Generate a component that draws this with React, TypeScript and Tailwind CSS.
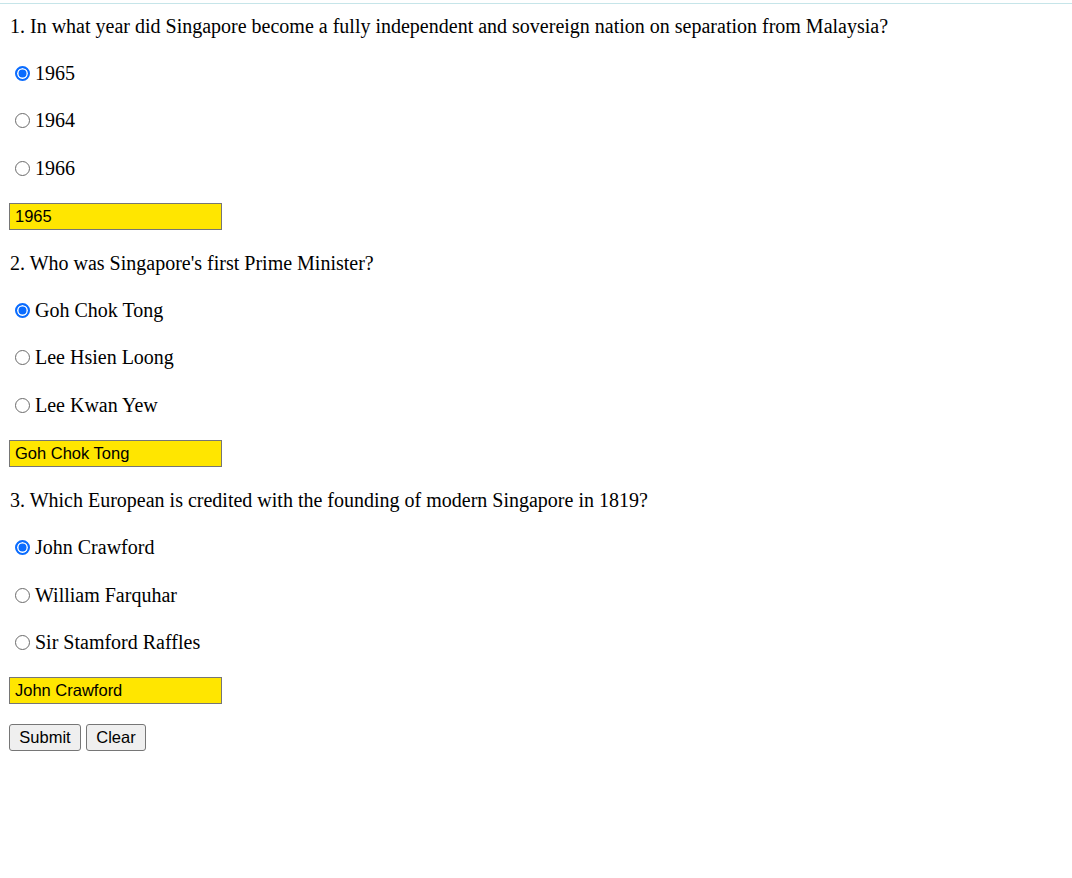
import { useState } from 'react';

type Question = {
  id: string;
  text: string;
  options: string[];
  initial: string;
};

const QUESTIONS: Question[] = [
  {
    id: 'q1',
    text: '1. In what year did Singapore become a fully independent and sovereign nation on separation from Malaysia?',
    options: ['1965', '1964', '1966'],
    initial: '1965',
  },
  {
    id: 'q2',
    text: "2. Who was Singapore's first Prime Minister?",
    options: ['Goh Chok Tong', 'Lee Hsien Loong', 'Lee Kwan Yew'],
    initial: 'Goh Chok Tong',
  },
  {
    id: 'q3',
    text: '3. Which European is credited with the founding of modern Singapore in 1819?',
    options: ['John Crawford', 'William Farquhar', 'Sir Stamford Raffles'],
    initial: 'John Crawford',
  },
];

const ROW = 'flex h-[47.43px] items-center';

export default function App() {
  const [answers, setAnswers] = useState<Record<string, string>>(() =>
    Object.fromEntries(QUESTIONS.map((q) => [q.id, q.initial])),
  );

  const clear = () => setAnswers(Object.fromEntries(QUESTIONS.map((q) => [q.id, ''])));

  return (
    <div className="min-h-[878px] bg-white font-['Liberation_Serif',serif] text-[20px] text-black">
      <div className="pt-[3px]">
        <div className="h-px bg-[#c6e5e9]" />
      </div>

      <form className="px-[9px]" onSubmit={(e) => e.preventDefault()}>
        {QUESTIONS.map((q, qi) => (
          <div key={q.id}>
            <div className={qi === 0 ? 'flex h-[45.7px] items-center pb-[1.5px]' : ROW}>
              <p className="pl-px leading-[23px]">{q.text}</p>
            </div>

            {q.options.map((opt) => (
              <div key={opt} className={ROW}>
                <label className="flex items-center leading-[23px]">
                  <input
                    type="radio"
                    name={q.id}
                    value={opt}
                    checked={answers[q.id] === opt}
                    onChange={() => setAnswers((a) => ({ ...a, [q.id]: opt }))}
                    className="m-0 ml-[6px] mr-[5px] h-[15px] w-[15px] shrink-0 appearance-none rounded-full border-[1.5px] border-[#6b6b6b] bg-white checked:border-2 checked:border-[#0a6cff] checked:bg-[#0a6cff] checked:shadow-[inset_0_0_0_1.5px_#fff]"
                  />
                  <span>{opt}</span>
                </label>
              </div>
            ))}

            <div className={`${ROW} pt-[2px]`}>
              <input
                type="text"
                readOnly
                value={answers[q.id]}
                className="h-[27px] w-[213px] border border-[#767676] bg-[#ffe600] px-[5px] font-['Liberation_Sans',Arial,sans-serif] text-[16.5px] text-black outline-none"
              />
            </div>
          </div>
        ))}

        <div className={`${ROW} gap-[5px]`}>
          <button
            type="submit"
            className="h-[27px] w-[72px] rounded-[3px] border border-[#767676] bg-[#efefef] font-['Liberation_Sans',Arial,sans-serif] text-[16.5px] text-black"
          >
            Submit
          </button>
          <button
            type="button"
            onClick={clear}
            className="h-[27px] w-[60px] rounded-[3px] border border-[#767676] bg-[#efefef] font-['Liberation_Sans',Arial,sans-serif] text-[16.5px] text-black"
          >
            Clear
          </button>
        </div>
      </form>
    </div>
  );
}
